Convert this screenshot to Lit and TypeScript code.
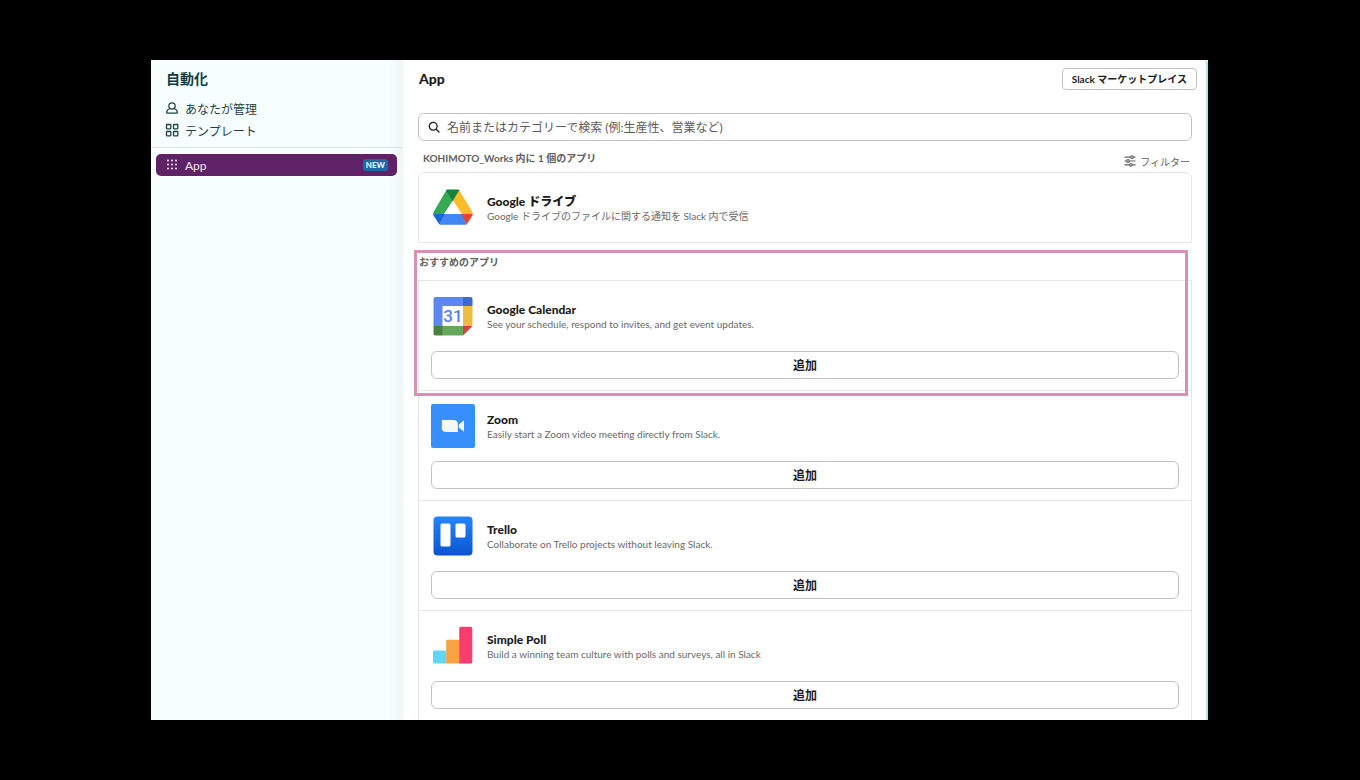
import { LitElement, html, svg, css, nothing, type TemplateResult } from "lit";
import { customElement, property } from "lit/decorators.js";

interface AppEntry {
  name: string;
  description: string;
  logo: TemplateResult;
}

const driveLogo = html`<svg viewBox="0 0 44 44" width="44" height="44" aria-hidden="true">
  ${svg`
  <path fill="#34a853" d="M15.2 4.6 17 3.6 22.4 13.6 13 28H2.2Q2 27 2.6 26Z"/>
  <path fill="#188038" d="M15.2 4.6Q15.8 3.6 17 3.6H27Q28.200 3.600 28.600 4.400L22 15.600Z"/>
  <path fill="#fbbc2c" d="M28.200 4.200 41.400 26Q42 27 41.800 28H30.800L22 14.600Z"/>
  <path fill="#4285f4" d="M12.600 28H32L35.500 38.400Q35 38.800 34 38.800H10Q9 38.800 8.500 38.400Z"/>
  <path fill="#1967d2" d="M2.200 28H13.600L8.500 38.200Q8 38 7.500 37.200L2.600 29.400Q2.200 28.800 2.200 28Z"/>
  <path fill="#ea4335" d="M30.600 28H41.800Q41.800 28.800 41.400 29.400L36.500 37.200Q36 38 35.500 38.400Z"/>
  <path fill="#fff" d="M22 15 30.200 28H13.800Z"/>`}
</svg>`;

const calendarLogo = html`<svg viewBox="0 0 44 44" width="44" height="44" aria-hidden="true">
  ${svg`
  <path fill="#5c87ee" d="M4.500 3H33V12H12V32H2.500V5Q2.500 3 4.500 3Z"/>
  <path fill="#3f68cc" d="M32 3H39.500Q41.500 3 41.500 5V12H32Z"/>
  <path fill="#ecbd40" d="M32 12H41.500V32H32Z"/>
  <path fill="#65a65b" d="M11 32H32V41.500H11Z"/>
  <path fill="#4a803f" d="M2.500 32H11.500V41.500H4.500Q2.500 41.500 2.500 39.500Z"/>
  <path fill="#d5423c" d="M32 32H41.500L32 41.500Z"/>
  <path fill="#fff" d="M11.500 12H32V32H11.500Z"/>
  <text class="day" x="22" y="28" text-anchor="middle">31</text>`}
</svg>`;

const zoomLogo = html`<svg viewBox="0 0 44 44" width="44" height="44" aria-hidden="true">
  ${svg`
  <rect width="44" height="44" rx="2" fill="#378ffe"/>
  <path fill="#f7f7f7" d="M10.800 16.500Q10.800 16 11.300 16H22.500Q26.800 16 26.800 20V27.500Q26.800 28 26.300 28H15Q10.800 28 10.800 24ZM27.800 20.500 33 16.200V27.800L27.800 23.500Z"/>`}
</svg>`;

const trelloLogo = html`<svg viewBox="0 0 44 44" width="44" height="44" aria-hidden="true">
  ${svg`
  <defs><linearGradient id="trello" x1="0" y1="0" x2="0" y2="1">
    <stop offset="0" stop-color="#2684ff"/><stop offset="1" stop-color="#0b54cf"/>
  </linearGradient></defs>
  <rect x="2.500" y="2.500" width="39" height="39" rx="4" fill="url(#trello)"/>
  <rect x="9.500" y="9.500" width="10" height="23" rx="1.500" fill="#fff"/>
  <rect x="24.500" y="9.500" width="10" height="14" rx="1.500" fill="#fff"/>`}
</svg>`;

const pollLogo = html`<svg viewBox="0 0 44 44" width="44" height="44" aria-hidden="true">
  ${svg`
  <path fill="#63d5f8" d="M3.500 26.500H15.500V39.500H3.500Q2 39.500 2 38V28Q2 26.500 3.500 26.500Z"/>
  <path fill="#f9a243" d="M16.500 15.800H28.500V39.500H15.200V17Q15.200 15.800 16.500 15.800Z"/>
  <path fill="#f93c6e" d="M29.800 2.800H39.500Q41.300 2.800 41.300 4.500V38Q41.300 39.500 39.500 39.500H28.200V4.500Q28.200 2.800 29.800 2.800Z"/>`}
</svg>`;

const installed: AppEntry = {
  name: "Google ドライブ",
  description: "Google ドライブのファイルに関する通知を Slack 内で受信",
  logo: driveLogo,
};

const recommended: AppEntry[] = [
  {
    name: "Google Calendar",
    description: "See your schedule, respond to invites, and get event updates.",
    logo: calendarLogo,
  },
  {
    name: "Zoom",
    description: "Easily start a Zoom video meeting directly from Slack.",
    logo: zoomLogo,
  },
  {
    name: "Trello",
    description: "Collaborate on Trello projects without leaving Slack.",
    logo: trelloLogo,
  },
  {
    name: "Simple Poll",
    description: "Build a winning team culture with polls and surveys, all in Slack",
    logo: pollLogo,
  },
];

@customElement("app-item")
class AppItem extends LitElement {
  @property({ attribute: false }) entry!: AppEntry;
  @property({ type: Boolean }) addable = false;

  static styles = css`
    :host {
      display: block;
      padding: 13px 12px 11px;
    }
    .row {
      display: flex;
      align-items: flex-start;
      gap: 12px;
    }
    .logo {
      flex: none;
      height: 44px;
    }
    .text {
      padding-top: 8px;
    }
    .day {
      font: 500 17px Roboto, sans-serif;
      fill: #5580e8;
    }
    .name {
      margin: 0;
      font-size: 12px;
      font-weight: 900;
      line-height: 16px;
      color: #1d1c1d;
    }
    .description {
      margin: 0;
      font-size: 10px;
      line-height: 13px;
      color: #696969;
    }
    .add {
      display: block;
      width: 100%;
      height: 28px;
      margin-top: 13px;
      padding: 0 0 2px;
      border: 1px solid #c3c3c3;
      border-radius: 6px;
      background: #fff;
      color: #1d1c1d;
      font: inherit;
      font-size: 12px;
      font-weight: 700;
    }
  `;

  render() {
    return html`
      <div class="row">
        <div class="logo">${this.entry.logo}</div>
        <div class="text">
          <h3 class="name">${this.entry.name}</h3>
          <p class="description">${this.entry.description}</p>
        </div>
      </div>
      ${this.addable ? html`<button class="add" type="button">追加</button>` : nothing}
    `;
  }
}

@customElement("app-root")
class AppRoot extends LitElement {
  static styles = css`
    :host {
      display: block;
      box-sizing: border-box;
      height: 100vh;
      padding: 60px 152px 60px 151px;
      background: #000;
      font-family: Lato, "Noto Sans CJK JP", sans-serif;
      color: #1d1c1d;
    }
    .window {
      display: grid;
      grid-template-columns: 252px minmax(0, 1fr);
      height: 100%;
      overflow: hidden;
      background: #fff;
    }
    .sidebar {
      background: linear-gradient(to right, #f7fefe 238px, #eff5f5);
      color: #1d3f46;
    }
    .sidebar-title {
      margin: 0;
      padding: 9px 15px 8px;
      font-size: 14px;
      line-height: 20px;
      font-weight: 700;
      color: #123c44;
    }
    .links {
      display: grid;
      padding: 0 14px 6px;
      border-bottom: 1px solid #dfe6e6;
    }
    .link {
      display: flex;
      align-items: center;
      gap: 6px;
      height: 22px;
      font-size: 12px;
      color: inherit;
      text-decoration: none;
    }
    .current {
      display: flex;
      align-items: center;
      gap: 6px;
      height: 22px;
      margin: 6px 6px 0 5px;
      padding: 0 9px;
      border-radius: 5px;
      background: #602267;
      color: #f1e6f2;
      font-size: 12px;
      text-decoration: none;
    }
    .badge {
      margin-left: auto;
      padding: 0 3px;
      border-radius: 3px;
      background: #1a6aa6;
      color: #fff;
      font-size: 8px;
      line-height: 12px;
      font-weight: 700;
    }
    .main {
      border-right: 2px solid #a8e6ea;
      border-top-right-radius: 4px;
      overflow: hidden;
    }
    .header {
      display: flex;
      align-items: center;
      justify-content: space-between;
      padding: 8px 9px 23px 16px;
    }
    .title {
      margin: 0;
      font-size: 14px;
      line-height: 22px;
      font-weight: 900;
    }
    .market {
      height: 22px;
      padding: 0 9px 2px;
      border: 1px solid #c3c3c3;
      border-radius: 4px;
      background: #fff;
      color: #1d1c1d;
      font: inherit;
      font-size: 10px;
      font-weight: 700;
    }
    .body {
      padding: 0 14px 0 15px;
    }
    .search {
      display: flex;
      align-items: center;
      gap: 7px;
      height: 26px;
      padding: 0 9px;
      border: 1px solid #c3c3c3;
      border-radius: 6px;
    }
    .query {
      flex: 1;
      min-width: 0;
      padding: 0;
      border: 0;
      outline: 0;
      background: none;
      font: inherit;
      font-size: 12px;
    }
    .query::placeholder {
      color: #5a5a5a;
    }
    .toolbar {
      display: flex;
      justify-content: space-between;
      height: 31px;
      padding: 0 2px 0 5px;
    }
    .count,
    .section-title {
      margin: 0;
      font-size: 10px;
      font-weight: 700;
      line-height: 16px;
      color: #616061;
    }
    .count {
      padding-top: 9px;
    }
    .filter {
      display: flex;
      align-items: center;
      gap: 4px;
      height: 16px;
      margin-top: 12px;
      padding: 0;
      border: 0;
      background: none;
      color: #616061;
      font: inherit;
      font-size: 10px;
    }
    .installed {
      padding-bottom: 12px;
      border: 1px solid #e6e6e6;
      border-radius: 6px 6px 0 0;
    }
    .spotlight {
      position: relative;
    }
    .spotlight::after {
      content: "";
      position: absolute;
      inset: 7px 4px -6px -4px;
      border: 3px solid #da90b2;
      pointer-events: none;
    }
    .section-title {
      padding: 11px 1px 10px;
    }
    .item {
      border: 1px solid #e6e6e6;
      border-bottom: 0;
    }
  `;

  render() {
    const [first, ...rest] = recommended;
    return html`
      <div class="window">
        <nav class="sidebar">
          <h2 class="sidebar-title">自動化</h2>
          <div class="links">
            <a class="link" href="#managed">
              <svg width="14" height="14" viewBox="0 0 14 14" fill="none" stroke="currentColor" stroke-width="1.200" stroke-linejoin="round" aria-hidden="true">
                <circle cx="7" cy="5" r="3.200"/>
                <path d="M4.900 7.500Q1.800 8.600 1.600 11.400 1.600 12.200 2.400 12.200H11.600Q12.400 12.200 12.400 11.400 12.200 8.600 9.100 7.500"/>
              </svg>
              あなたが管理
            </a>
            <a class="link" href="#templates">
              <svg width="14" height="14" viewBox="0 0 14 14" fill="none" stroke="currentColor" stroke-width="1.300" aria-hidden="true">
                <rect x="1.500" y="1.500" width="4.300" height="4.300" rx="0.500"/>
                <rect x="8.500" y="1.500" width="4.300" height="4.300" rx="0.500"/>
                <rect x="1.500" y="8.500" width="4.300" height="4.300" rx="0.500"/>
                <rect x="8.500" y="8.500" width="4.300" height="4.300" rx="0.500"/>
              </svg>
              テンプレート
            </a>
          </div>
          <a class="current" href="#apps" aria-current="page">
            <svg width="14" height="14" viewBox="0 0 14 14" fill="currentColor" aria-hidden="true">
              ${[2.5, 6.5, 10.5].map((y) => [3, 7, 11].map((x) => svg`<circle cx=${x} cy=${y} r="1"/>`))}
            </svg>
            App
            <span class="badge">NEW</span>
          </a>
        </nav>
        <main class="main">
          <header class="header">
            <h1 class="title">App</h1>
            <button class="market" type="button">Slack マーケットプレイス</button>
          </header>
          <div class="body">
            <label class="search">
              <svg width="12" height="12" viewBox="0 0 12 12" fill="none" stroke="#1d1c1d" stroke-width="1.300" stroke-linecap="round" aria-hidden="true">
                <circle cx="5.200" cy="5.200" r="3.900"/>
                <path d="M8.200 8.200 11 11"/>
              </svg>
              <input class="query" type="text" aria-label="アプリを検索" placeholder="名前またはカテゴリーで検索 (例:生産性、営業など)" />
            </label>
            <div class="toolbar">
              <h2 class="count">KOHIMOTO_Works 内に 1 個のアプリ</h2>
              <button class="filter" type="button">
                <svg width="12" height="12" viewBox="0 0 12 12" fill="none" stroke="currentColor" stroke-width="1.200" aria-hidden="true">
                  <path d="M0.500 2.200H6.500M9.500 2.200H11.500M0.500 6H2.500M5.500 6H11.500M0.500 9.800H5.500M8.500 9.800H11.500"/>
                  <circle cx="8" cy="2.200" r="1.300"/>
                  <circle cx="4" cy="6" r="1.300"/>
                  <circle cx="7" cy="9.800" r="1.300"/>
                </svg>
                フィルター
              </button>
            </div>
            <app-item class="installed" .entry=${installed}></app-item>
            <section class="spotlight">
              <h2 class="section-title">おすすめのアプリ</h2>
              <app-item class="item" addable .entry=${first}></app-item>
            </section>
            ${rest.map((entry) => html`<app-item class="item" addable .entry=${entry}></app-item>`)}
          </div>
        </main>
      </div>
    `;
  }
}
